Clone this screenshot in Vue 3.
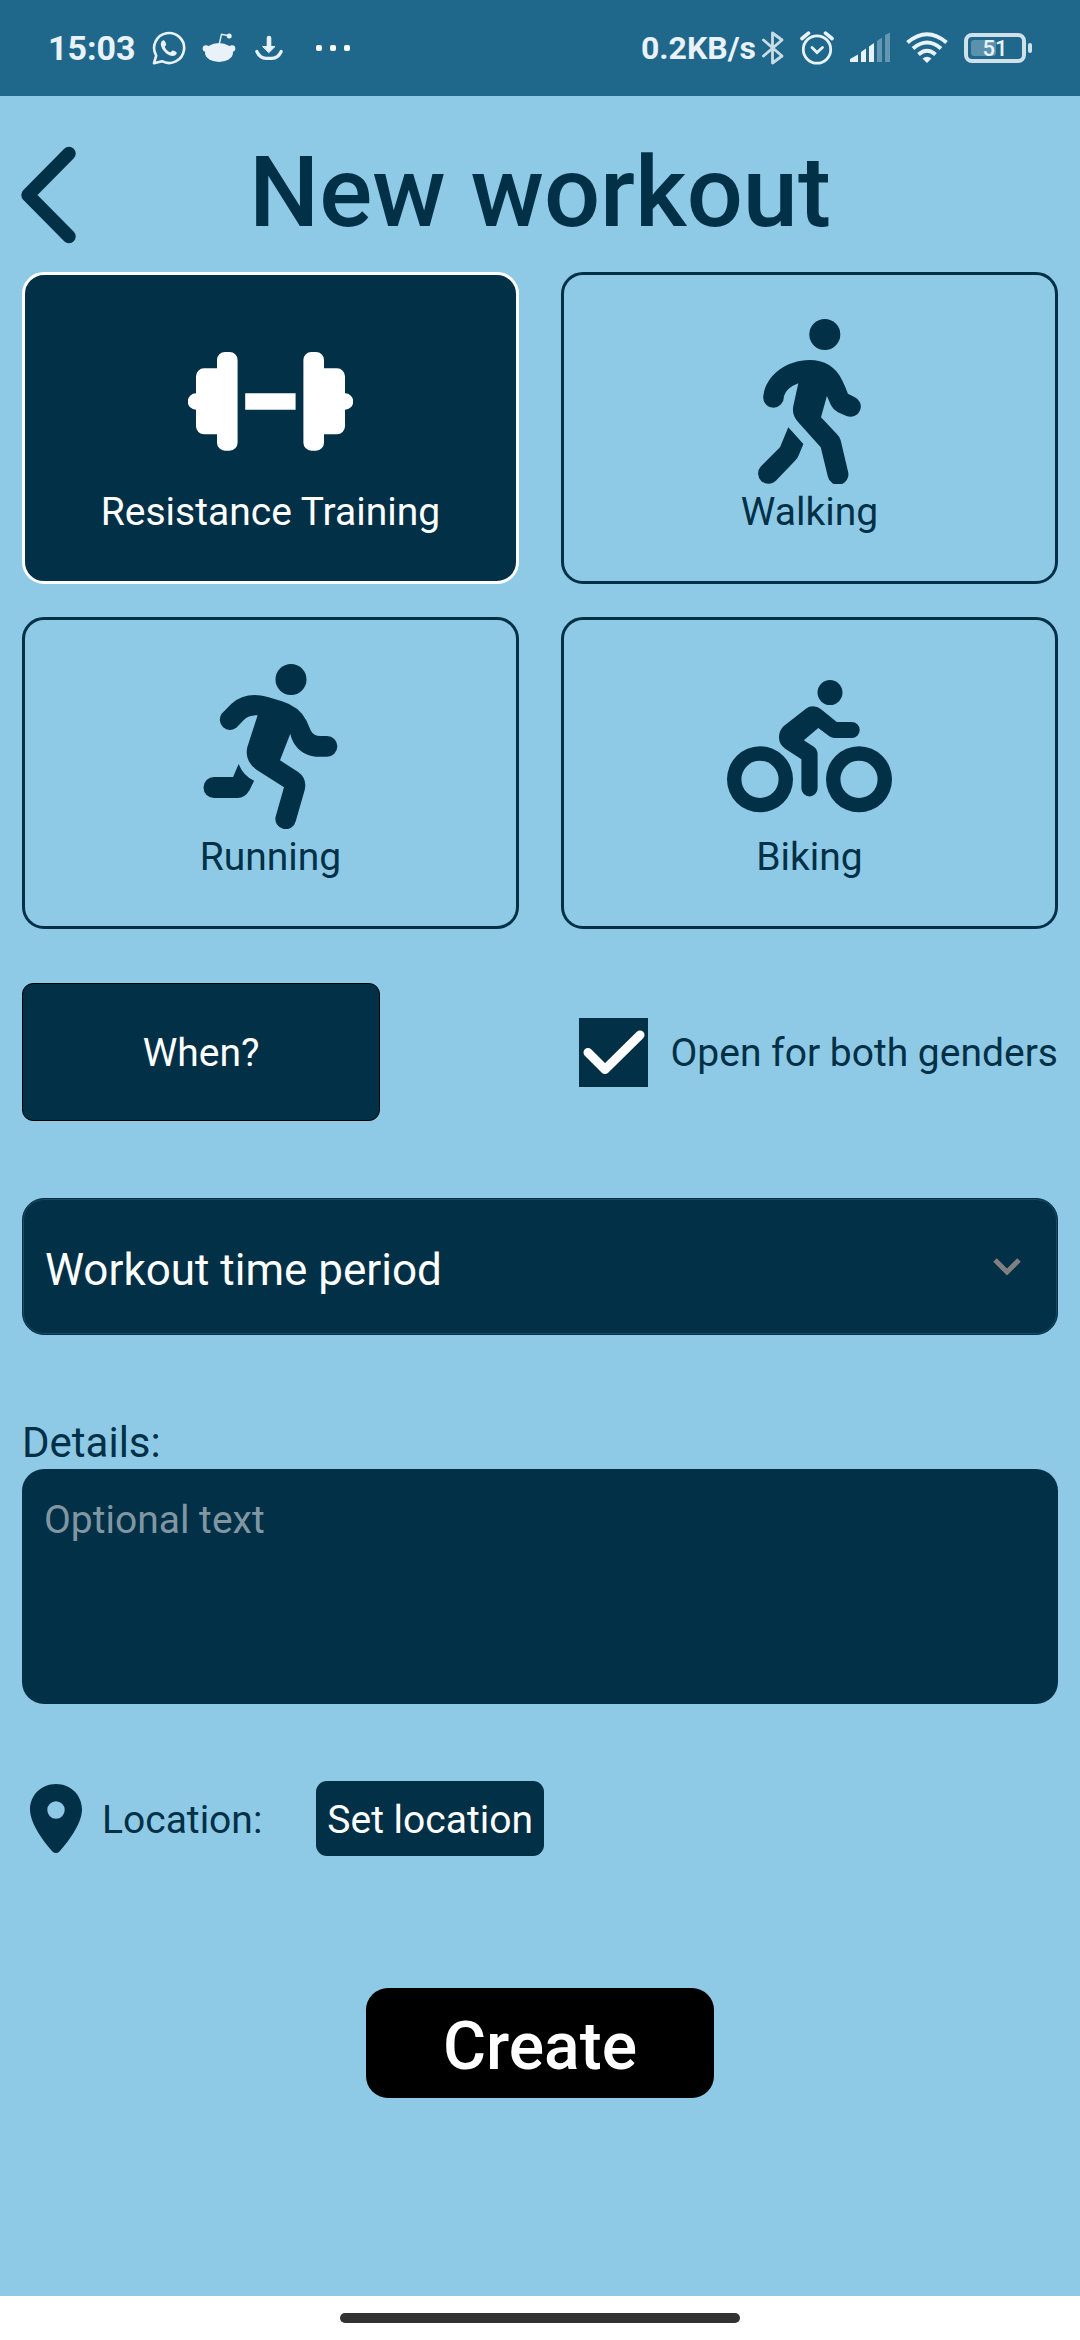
<script setup>
import { ref } from 'vue'

const activities = [
  {
    id: 'resistance',
    label: 'Resistance Training',
    shapes: [
      'M8 74.3V57.3a8 8 0 0 1 8-8h13V41a8 8 0 0 1 8-8h4.600a8 8 0 0 1 8 8v82.700a8 8 0 0 1-8 8H37a8 8 0 0 1-8-8V115.300H16a8 8 0 0 1-8-8V90.700a8.200 8.200 0 0 1 0-16.400Z',
      'M57.200 74.300h50.400v16.400H57.200Z',
      'M157 74.300V57.300a8 8 0 0 0-8-8H136V41a8 8 0 0 0-8-8h-4.600a8 8 0 0 0-8 8v82.700a8 8 0 0 0 8 8H128a8 8 0 0 0 8-8V115.300h13a8 8 0 0 0 8-8V90.700a8.200 8.200 0 0 0 0-16.400Z',
    ],
  },
  {
    id: 'walking',
    label: 'Walking',
    shapes: [
      'M82.300 15.500a15.500 15.500 0 1 0 31 0a15.500 15.500 0 1 0-31 0Z',
      'M82.600 40.900C97 40.900 109 47.500 115.400 61.700Q118.500 68 120.900 74.700L127.400 77.900A10.300 10.300 0 0 1 119.500 97L110.900 93.300Q106 90.500 104 86.300L99.900 77L94 98.300L109.800 115Q112.800 118 113.600 121L121.200 153.300A10.300 10.300 0 0 1 100.900 157.700L93.700 128.300L71.300 103.300Q64.500 96 66.300 87L71.300 64.300Q59 69 56.800 77.500A10.300 10.300 0 1 1 36.500 76C39 56 60 40.900 82.600 40.900Z',
      'M61.300 108.300L76.400 125L71.600 136.500Q70.500 139.500 67.800 142L49.100 161.500A10.300 10.300 0 0 1 33.800 147.500L53 128.300Z',
    ],
  },
  {
    id: 'running',
    label: 'Running',
    shapes: [
      'M87.500 15.500a15.500 15.500 0 1 0 31 0a15.500 15.500 0 1 0-31 0Z',
      'M66.800 31Q73 31 78.900 32.700L94 37.200Q111.500 42.500 118.500 56.700L122.900 66.700Q125.800 72 132.200 72H139a10.350 10.350 0 0 1 0 20.700H130.500C116 92.700 105 83 102.300 69.700L92 96.300L109.800 107.700Q119.500 114.500 116.700 126L107.800 157A10.300 10.300 0 0 1 87.600 152.700L96 123.300L68.500 105.700Q56.500 97 59.200 83.500L69.600 51.200Q60.500 51 55.800 56L48.600 63.600A10.300 10.300 0 0 1 33.600 49.800L43.500 39.700Q53 31 66.800 31Z',
      'M50.600 100Q55.500 112 66.100 116.700L61.600 126Q57 134 49.600 134H26a10.500 10.500 0 0 1 0-21H45.100Z',
    ],
  },
  {
    id: 'biking',
    label: 'Biking',
    shapes: [
      'M90.500 28.600a12.500 12.500 0 1 0 25 0a12.500 12.500 0 1 0-25 0Z',
      'M86 42.300Q90.500 42.300 93.700 45L109.800 58H124.700a8 8 0 0 1 0 16H107.400Q104.800 74 102.300 72.200L91.300 64L76.800 76.300L86.800 82.700Q90.600 85.500 90.600 90V124.300a8.100 8.100 0 0 1-16.200 0V95.300L58.200 84.700Q52 80.500 52 73.300Q52 66.500 56.800 62L78.900 44.700Q82 42.300 86 42.300Z',
      'M0 115.300a33 33 0 1 0 66 0a33 33 0 1 0-66 0ZM14.400 115.300a18.600 18.600 0 1 0 37.200 0a18.600 18.600 0 1 0-37.200 0Z',
      'M99 115.300a33 33 0 1 0 66 0a33 33 0 1 0-66 0ZM113.400 115.300a18.600 18.600 0 1 0 37.200 0a18.600 18.600 0 1 0-37.200 0Z',
    ],
  },
]

const selected = ref('resistance')
const bothGenders = ref(true)
const period = ref('')
const details = ref('')
</script>

<template>
  <div class="screen">
    <div class="status">
      <div class="status-group">
        <span class="clock">15:03</span>
        <svg width="34" height="34" viewBox="0 0 34 34" aria-hidden="true">
          <path d="M2 32.200L4.200 24.600A15 15 0 1 1 10 30.200Z" fill="none" stroke="currentColor" stroke-width="2.600" stroke-linejoin="round" />
          <path d="M11.500 9.300C9.500 9.600 8.400 12 9 14.500C10.200 19.500 15 24.300 20 25C22.500 25.300 24.800 23.800 24.800 21.800C24.500 20.800 21.500 19.300 20.500 19.500C19.500 19.800 19 21.500 18 21.200C15.500 20.200 13.500 18 12.800 16C12.800 15.200 14.200 14.500 14.200 13.600C14 12.300 13 9.400 11.500 9.300Z" fill="currentColor" />
        </svg>
        <svg width="34" height="34" viewBox="0 0 34 34" fill="currentColor" aria-hidden="true">
          <ellipse cx="17" cy="21.500" rx="14" ry="9.500" />
          <circle cx="4" cy="17.500" r="3.300" />
          <circle cx="30" cy="17.500" r="3.300" />
          <path d="M17.500 12L19.500 3.300L27 4.800" fill="none" stroke="currentColor" stroke-width="1.400" />
          <circle cx="27.200" cy="5" r="2.500" />
        </svg>
        <svg width="34" height="34" viewBox="0 0 34 34" fill="none" stroke="currentColor" stroke-linecap="round" aria-hidden="true">
          <path d="M17 7V18" stroke-width="4.600" />
          <path d="M11 15.500H23L17 21.500Z" fill="currentColor" stroke-width="1" stroke-linejoin="round" />
          <path d="M4.800 20.500Q8 27.300 14 27.300H20Q26 27.300 29.200 20.500" stroke-width="3.200" />
        </svg>
        <svg width="48" height="34" viewBox="0 0 48 34" fill="#fff" aria-hidden="true">
          <rect x="14" y="14" width="6" height="6" rx="2" />
          <rect x="28" y="14" width="6" height="6" rx="2" />
          <rect x="42" y="14" width="6" height="6" rx="2" />
        </svg>
      </div>
      <div class="status-group">
        <div class="network">
          <span class="speed">0.2KB/s</span>
          <svg width="22" height="34" viewBox="0 0 22 34" fill="none" stroke="currentColor" stroke-width="2.800" stroke-linejoin="round" stroke-linecap="round" opacity=".85" aria-hidden="true">
            <path d="M1.500 9L20 25L10.500 32V2L20 9L1.500 25" />
          </svg>
        </div>
        <svg width="34" height="34" viewBox="1 0 34 34" fill="none" stroke="currentColor" stroke-width="2.800" stroke-linecap="round" aria-hidden="true">
          <circle cx="18" cy="18.500" r="13.700" />
          <path d="M13 16.500L18 21.500L23.500 16.500" />
          <path d="M3 7.500L9.500 2.200M26.500 2.200L33 7.500" stroke-width="3.600" />
        </svg>
        <svg width="40" height="34" viewBox="0 0 40 34" fill="currentColor" aria-hidden="true">
          <path d="M0 31V28L8 23.500V31ZM11 31V21L16 17.500V31ZM19 31V15.500L24 12V31Z" />
          <path d="M27 31V10L32 6.500V31ZM35 31V4L40 1.500V31Z" opacity=".35" />
        </svg>
        <svg width="42" height="34" viewBox="0 0 42 34" fill="none" stroke="currentColor" stroke-width="4" aria-hidden="true">
          <path d="M1.500 11.500Q21-5 40.500 11.500M7 17.500Q21 5.500 35 17.500M12.500 23.500Q21 16 29.500 23.500" />
          <path d="M16.500 27.500Q21 24 25.500 27.500L21 32Z" fill="currentColor" stroke="none" />
        </svg>
        <svg class="battery" width="68" height="34" viewBox="0 0 68 34" aria-hidden="true">
          <rect x="2" y="4" width="58" height="26" rx="6" fill="none" stroke="currentColor" stroke-width="4" opacity=".88" />
          <rect x="7" y="9" width="25" height="16" rx="3" fill="currentColor" opacity=".3" />
          <rect x="64" y="12" width="4" height="10" rx="2" fill="currentColor" opacity=".88" />
          <text x="31" y="25" text-anchor="middle" fill="currentColor">51</text>
        </svg>
      </div>
    </div>

    <header class="header">
      <button class="back" type="button" aria-label="Back">
        <svg width="56" height="98" viewBox="0 0 56 98" fill="none" stroke="currentColor" stroke-width="13.500" stroke-linecap="round" stroke-linejoin="round" aria-hidden="true">
          <path d="M49 7.500L8 49L49 90.500" />
        </svg>
      </button>
      <h1>New workout</h1>
    </header>

    <main class="content">
      <div class="activities">
        <button
          v-for="a in activities"
          :key="a.id"
          type="button"
          class="card"
          :class="{ active: a.id === selected }"
          :aria-pressed="a.id === selected"
          @click="selected = a.id"
        >
          <svg width="165" height="165" viewBox="0 0 165 165" fill="currentColor" fill-rule="evenodd" aria-hidden="true">
            <path v-for="(d, i) in a.shapes" :key="i" :d="d" />
          </svg>
          <span>{{ a.label }}</span>
        </button>
      </div>

      <div class="when-row">
        <button class="when" type="button">When?</button>
        <label class="check">
          <span class="check-box">
            <input v-model="bothGenders" type="checkbox" />
            <svg v-show="bothGenders" width="69" height="69" viewBox="0 0 69 69" fill="none" stroke="#fff" stroke-width="9" stroke-linecap="round" stroke-linejoin="round" aria-hidden="true">
              <path d="M9 34.500L26 51.500L61 17" />
            </svg>
          </span>
          <span class="check-label">Open for both genders</span>
        </label>
      </div>

      <div class="period">
        <select v-model="period" aria-label="Workout time period">
          <option value="">Workout time period</option>
          <option value="morning">Morning</option>
          <option value="evening">Evening</option>
        </select>
        <svg width="28" height="18" viewBox="0 0 28 18" fill="none" stroke="#808080" stroke-width="5" aria-hidden="true">
          <path d="M2 2L14 14L26 2" />
        </svg>
      </div>

      <div class="details">
        <label for="details">Details:</label>
        <textarea id="details" v-model="details" placeholder="Optional text"></textarea>
      </div>

      <div class="location">
        <svg width="52" height="69" viewBox="0 0 52 69" fill="currentColor" fill-rule="evenodd" aria-hidden="true">
          <path d="M26 0C11.500 0 0 11 0 25.500C0 40.500 16 60.500 22.500 67.500Q26 70.500 29.500 67.500C36 60.500 52 40.500 52 25.500C52 11 40.500 0 26 0ZM17.300 26a8.700 8.700 0 1 0 17.400 0a8.700 8.700 0 1 0-17.400 0Z" />
        </svg>
        <span>Location:</span>
        <button class="set-location" type="button">Set location</button>
      </div>

      <button class="create" type="button">Create</button>
    </main>

    <div class="nav-bar"><span class="handle"></span></div>
  </div>
</template>

<style>
body {
  margin: 0;
  background: #8ecae6;
}
</style>

<style scoped>
.screen {
  display: flex;
  flex-direction: column;
  min-height: 100vh;
  background: #8ecae6;
  color: #023047;
  font-family: Roboto, "Noto Sans", sans-serif;
  font-size: 39px;
}

.screen *,
.screen {
  box-sizing: border-box;
}

svg {
  display: block;
  flex: none;
}

button,
select,
textarea {
  margin: 0;
  padding: 0;
  border: 0;
  font: inherit;
  color: inherit;
}

button {
  cursor: pointer;
}

.status {
  display: flex;
  justify-content: space-between;
  align-items: center;
  height: 96px;
  padding: 0 48px;
  background: #1f688b;
  color: #e8f2f8;
  font-weight: 700;
}

.status-group {
  display: flex;
  align-items: center;
  gap: 16px;
}

.network {
  display: flex;
  align-items: center;
  gap: 6px;
}

.clock {
  font-size: 34px;
}

.speed {
  font-size: 32px;
}

.battery text {
  font-size: 22px;
  font-weight: 500;
}

.header {
  display: grid;
  grid-template-columns: 1fr auto 1fr;
  align-items: center;
  height: 176px;
  padding: 16px 20px 0;
}

.back {
  justify-self: start;
  padding-top: 6px;
  background: none;
}

h1 {
  margin: 0;
  font-size: 99px;
  line-height: 116px;
  font-weight: 500;
}

.content {
  flex: 1;
  display: flex;
  flex-direction: column;
  padding: 0 22px 44px;
}

.activities {
  display: grid;
  grid-template-columns: 1fr 1fr;
  gap: 33px 42px;
}

.card {
  display: flex;
  flex-direction: column;
  align-items: center;
  justify-content: center;
  height: 312px;
  padding-top: 2px;
  border: 3px solid #023047;
  border-radius: 22px;
  background: none;
  line-height: 56px;
}

.card.active {
  border-color: #fff;
  background: #023047;
  color: #fff;
}

.when-row {
  display: flex;
  justify-content: space-between;
  align-items: center;
  margin-top: 54px;
}

.when {
  width: 358px;
  height: 138px;
  padding-top: 2px;
  border: 1px solid #000;
  border-radius: 11px;
  background: #023047;
  color: #fff;
}

.check {
  display: flex;
  align-items: center;
  gap: 22px;
}

.check-label {
  padding-top: 2px;
}

.check-box {
  display: grid;
}

.check-box > * {
  grid-area: 1 / 1;
}

.check-box input {
  width: 69px;
  height: 69px;
  margin: 0;
  appearance: none;
  background: #023047;
}

.check-box svg {
  pointer-events: none;
}

.period {
  display: grid;
  align-items: center;
  margin-top: 77px;
}

.period > * {
  grid-area: 1 / 1;
}

.period select {
  width: 100%;
  height: 137px;
  padding: 6px 22px 0;
  appearance: none;
  border: 1px solid #023047;
  border-radius: 22px;
  background: #023047;
  box-shadow: inset 0 0 0 1px #1c4a63;
  color: #fff;
  font-size: 44px;
}

.period svg {
  justify-self: end;
  margin-right: 37px;
  pointer-events: none;
}

.details {
  display: flex;
  flex-direction: column;
  margin-top: 82px;
}

.details label {
  font-size: 42px;
  line-height: 52px;
}

.details textarea {
  height: 235px;
  padding: 22px;
  border-radius: 22px;
  background: #023047;
  color: #fff;
  line-height: 58px;
  resize: none;
}

.details textarea::placeholder {
  color: #8097a3;
  opacity: 1;
}

.location {
  display: flex;
  align-items: center;
  margin-top: 77px;
  padding-left: 8px;
}

.location span {
  margin: 0 54px 0 20px;
  padding-top: 2px;
}

.set-location {
  height: 75px;
  padding: 2px 11px 0;
  border-radius: 11px;
  background: #023047;
  color: #fff;
}

.create {
  align-self: center;
  width: 348px;
  height: 110px;
  margin-top: 132px;
  padding-top: 6px;
  border-radius: 22px;
  background: #000;
  color: #fff;
  font-size: 66px;
  font-weight: 500;
}

.nav-bar {
  display: flex;
  justify-content: center;
  align-items: center;
  height: 44px;
  background: #fff;
}

.handle {
  width: 37%;
  height: 10px;
  border-radius: 5px;
  background: #323232;
}
</style>
